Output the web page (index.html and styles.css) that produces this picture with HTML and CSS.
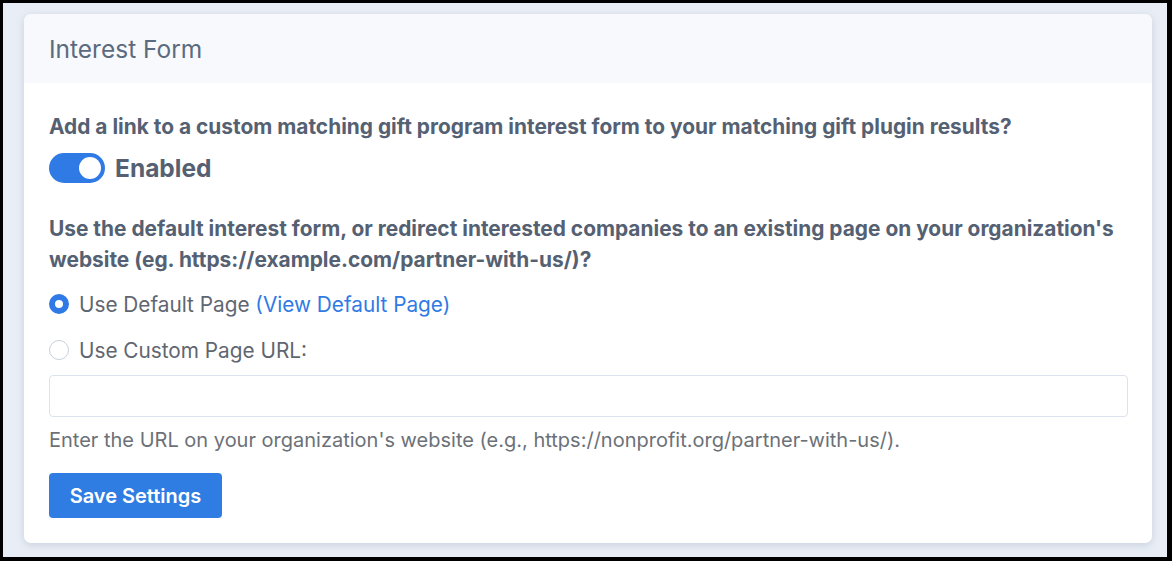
FILE: index.html
```html
<!DOCTYPE html>
<html>
<head>
<meta charset="utf-8">
<link rel="stylesheet" href="styles.css">
</head>
<body>
<div class="frame">
  <div class="card">
    <div class="card-header">
      <h2 class="card-title">Interest Form</h2>
    </div>
    <div class="card-body">
      <p class="question q1">Add a link to a custom matching gift program interest form to your matching gift plugin results?</p>
      <div class="toggle-row">
        <span class="toggle"><span class="knob"></span></span>
        <span class="toggle-label">Enabled</span>
      </div>
      <p class="question q2">Use the default interest form, or redirect interested companies to an existing page on your organization's website (eg. https://example.com/partner-with-us/)?</p>
      <label class="radio-row">
        <span class="radio checked"></span>
        <span class="radio-label">Use Default Page <a class="link">(View Default Page)</a></span>
      </label>
      <label class="radio-row second">
        <span class="radio"></span>
        <span class="radio-label">Use Custom Page URL:</span>
      </label>
      <div class="input"></div>
      <p class="help">Enter the URL on your organization's website (e.g., https://nonprofit.org/partner-with-us/).</p>
      <button class="btn">Save Settings</button>
    </div>
  </div>
</div>
</body>
</html>
```
FILE: styles.css
```css
* { box-sizing: border-box; }
html, body { margin: 0; padding: 0; }
body {
  width: 1172px;
  height: 561px;
  font-family: Inter, "Noto Sans", sans-serif;
  background: #000;
}
.frame {
  width: 1172px;
  height: 561px;
  border-style: solid;
  border-color: #000;
  border-width: 3px 5px 4px 3px;
  background: #e9eef6;
  padding: 11px 15px 14px 21px;
}
.card {
  background: #fff;
  border-radius: 7px;
  height: 529px;
  overflow: hidden;
  box-shadow: 0 2px 8px rgba(60, 80, 110, 0.18);
}
.card-header {
  background: #f7f9fc;
  height: 69px;
  padding: 0 25px;
  display: flex;
  align-items: center;
}
.card-title {
  margin: 0;
  font-size: 24.5px;
  font-weight: 400;
  color: #5b6b7f;
}
.card-body {
  padding: 28px 25px 25px;
}
.question {
  margin: 0;
  font-size: 20.88px;
  font-weight: 700;
  color: #556172;
  line-height: 31px;
}
.toggle-row {
  display: flex;
  align-items: center;
  gap: 10px;
  margin-top: 11px;
  height: 30px;
}
.toggle {
  width: 56px;
  height: 30px;
  border-radius: 15px;
  background: #2f7ae5;
  position: relative;
  display: inline-block;
  flex: none;
}
.knob {
  position: absolute;
  right: 4px;
  top: 4px;
  width: 22px;
  height: 22px;
  border-radius: 50%;
  background: #fff;
}
.toggle-label {
  font-size: 24.5px;
  font-weight: 700;
  color: #556172;
}
.q2 { margin-top: 30px; }
.radio-row {
  display: flex;
  align-items: center;
  gap: 10px;
  margin-top: 15px;
  height: 28px;
}
.radio-row.second { margin-top: 18px; }
.radio {
  width: 20px;
  height: 20px;
  border-radius: 50%;
  border: 1px solid #c9d0da;
  background: #fff;
  display: inline-block;
  flex: none;
}
.radio.checked {
  border: 6px solid #2f7ae5;
}
.radio-label {
  font-size: 20.78px;
  color: #5f6670;
}
.link { color: #2f7ae5; }
.input {
  margin-top: 11px;
  height: 42px;
  border: 1px solid #dde3ec;
  border-radius: 4px;
  width: 1079px;
}
.help {
  margin: 11px 0 0;
  font-size: 20px;
  color: #6c7178;
  line-height: 24px;
}
.btn {
  display: block;
  margin-top: 21px;
  background: #2f7de3;
  color: #fff;
  border: none;
  border-radius: 4px;
  font-family: Inter, sans-serif;
  font-weight: 600;
  font-size: 20px;
  height: 45px;
  width: 173px;
  padding: 0;
}
```
